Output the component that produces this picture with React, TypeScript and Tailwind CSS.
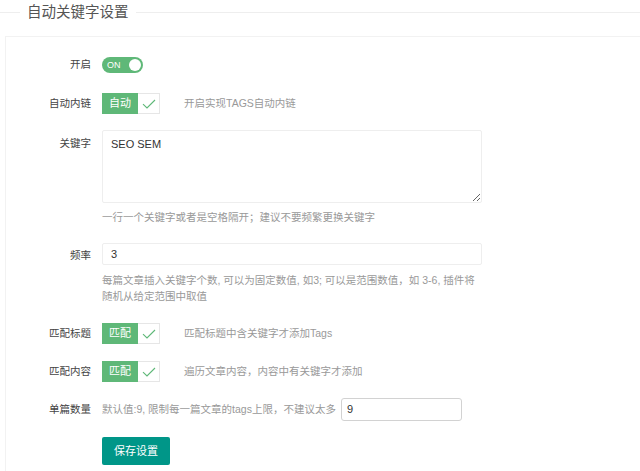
import React from 'react';

const font = { fontFamily: '"Liberation Sans", Arial, "Noto Sans CJK SC", sans-serif' };

const Check = () => (
  <svg width="14" height="10" viewBox="0 0 14 10" fill="none">
    <path d="M1 5.2 L5 9 L13 1" stroke="#5FB878" strokeWidth="1.1" />
  </svg>
);

const CheckBtn = ({ text }: { text: string }) => (
  <div className="flex h-[21px]">
    <div className="w-[36px] h-full bg-[#5FB878] text-white text-[11px] flex items-center justify-center">{text}</div>
    <div className="w-[22px] h-full border border-l-0 border-[#e6e6e6] bg-white flex items-center justify-center">
      <Check />
    </div>
  </div>
);

const Label = ({ children, className = '' }: { children: React.ReactNode; className?: string }) => (
  <div className={`w-[96px] shrink-0 pr-[11px] text-right text-[10.5px] text-[#444] ${className}`}>{children}</div>
);

export default function App() {
  return (
    <div className="w-[640px] h-[471px] bg-white overflow-hidden" style={font}>
      {/* legend */}
      <div className="flex items-center h-[20px] mt-[2px]">
        <div className="w-[20px] h-px bg-[#eeeeee]" />
        <div className="px-[7px] text-[14.5px] text-[#555] leading-[20px]">自动关键字设置</div>
        <div className="flex-1 h-px bg-[#eeeeee]" />
      </div>

      <div className="ml-[5px] mt-[14px] border-t border-l border-[#f2f2f2] h-[500px]">
        {/* 开启 */}
        <div className="flex items-center mt-[20px] h-[16px]">
          <Label>开启</Label>
          <div className="w-[41px] h-[16px] rounded-full bg-[#5FB878] flex items-center justify-between pl-[5px] pr-[2px]">
            <span className="text-white text-[9px] leading-none">ON</span>
            <span className="w-[12px] h-[12px] rounded-full bg-white" />
          </div>
        </div>

        {/* 自动内链 */}
        <div className="flex items-center mt-[20px] h-[21px]">
          <Label>自动内链</Label>
          <CheckBtn text="自动" />
          <div className="ml-[24px] text-[10.5px] text-[#999]">开启实现TAGS自动内链</div>
        </div>

        {/* 关键字 */}
        <div className="flex mt-[16px]">
          <Label className="pt-[6px]">关键字</Label>
          <textarea
            readOnly
            defaultValue="SEO SEM"
            className="w-[380px] h-[73px] border border-[#eeeeee] rounded-[2px] px-[8px] pt-[5px] text-[11px] text-[#333] outline-none"
            style={font}
          />
        </div>
        <div className="ml-[96px] mt-[6px] text-[10.5px] leading-[16px] text-[#999]">一行一个关键字或者是空格隔开；建议不要频繁更换关键字</div>

        {/* 频率 */}
        <div className="flex items-center mt-[18px]">
          <Label className="pt-[4px]">频率</Label>
          <div className="w-[380px] h-[22px] border border-[#eeeeee] rounded-[2px] px-[8px] flex items-center text-[11px] text-[#333]">3</div>
        </div>
        <div className="ml-[96px] mt-[7px] whitespace-nowrap text-[10.5px] leading-[16px] text-[#999]">
          每篇文章插入关键字个数, 可以为固定数值, 如3; 可以是范围数值，如 3-6, 插件将
          <br />
          随机从给定范围中取值
        </div>

        {/* 匹配标题 */}
        <div className="flex items-center mt-[19px] h-[21px]">
          <Label>匹配标题</Label>
          <CheckBtn text="匹配" />
          <div className="ml-[24px] text-[10.5px] text-[#999]">匹配标题中含关键字才添加Tags</div>
        </div>

        {/* 匹配内容 */}
        <div className="flex items-center mt-[17px] h-[21px]">
          <Label>匹配内容</Label>
          <CheckBtn text="匹配" />
          <div className="ml-[24px] text-[10.5px] text-[#999]">遍历文章内容，内容中有关键字才添加</div>
        </div>

        {/* 单篇数量 */}
        <div className="flex items-center mt-[16px] h-[23px]">
          <Label>单篇数量</Label>
          <div className="text-[10.5px] text-[#999] w-[239px] whitespace-nowrap">默认值:9, 限制每一篇文章的tags上限，不建议太多</div>
          <div className="w-[121px] h-[23px] border border-[#d2d2d2] rounded-[3px] px-[5px] flex items-center text-[11px] text-[#333]">9</div>
        </div>

        {/* 保存 */}
        <div className="flex mt-[16px]">
          <div className="w-[96px]" />
          <button className="w-[68px] h-[28px] bg-[#009688] text-white text-[11px] rounded-[2px]">保存设置</button>
        </div>
      </div>
    </div>
  );
}
